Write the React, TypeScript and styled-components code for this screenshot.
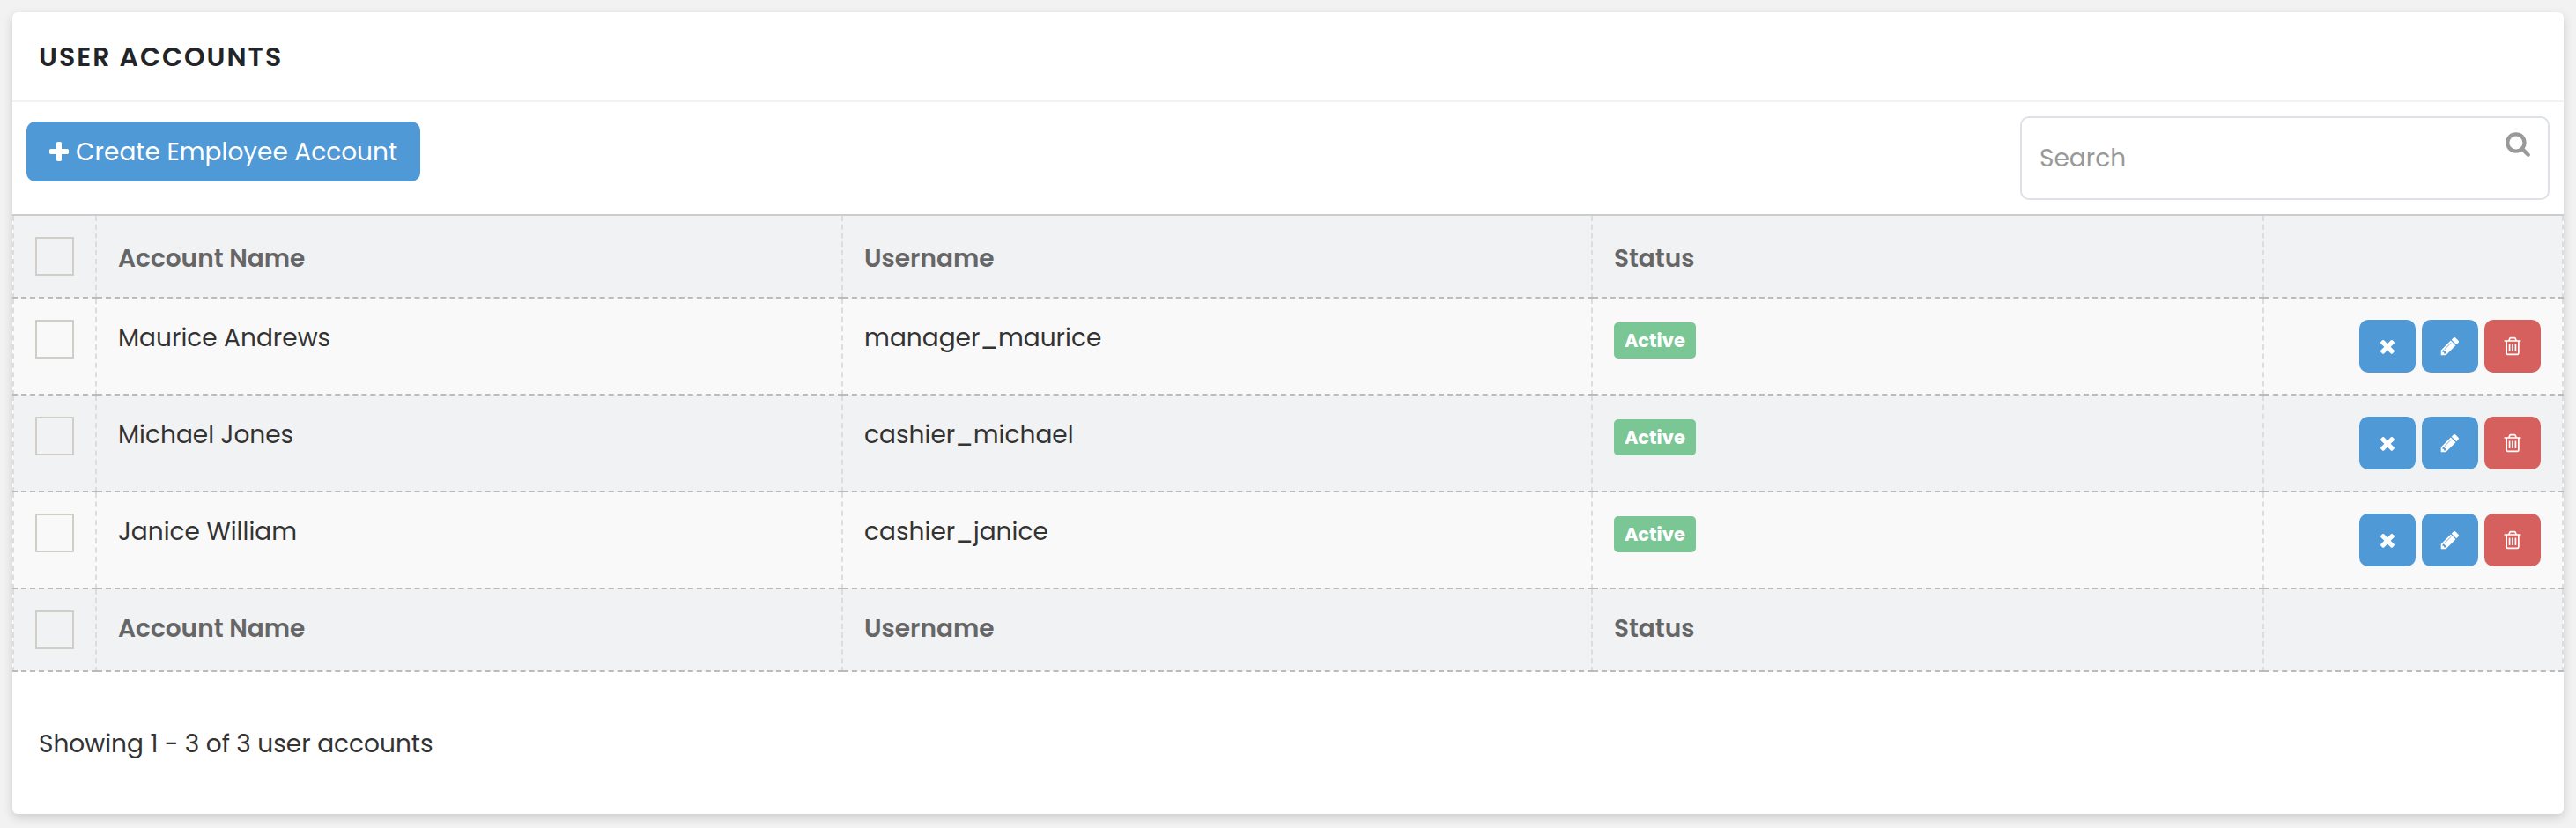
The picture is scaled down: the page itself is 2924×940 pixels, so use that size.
import React, { useState } from "react";
import styled, { createGlobalStyle } from "styled-components";

const GlobalStyle = createGlobalStyle`
  *, *::before, *::after { box-sizing: border-box; }
  body {
    margin: 0;
    background: #f2f2f2;
    color: #333;
    font-family: Poppins, Inter, "Liberation Sans", sans-serif;
    font-size: 28px;
    line-height: 42px;
  }
  button, input { font: inherit; }
`;

const Page = styled.main`
  padding: 14px 14px 16px;
`;

const Card = styled.section`
  background: #fff;
  border-radius: 6px;
  box-shadow: 0 4px 12px rgba(0, 0, 0, 0.16);
`;

const CardHeader = styled.header`
  padding: 30px 30px 28px;
  border-bottom: 2px solid #f3f3f3;
`;

const Title = styled.h1`
  margin: 0;
  color: #222427;
  font-size: 30px;
  font-weight: 600;
  letter-spacing: 2px;
  text-transform: uppercase;
`;

const Toolbar = styled.div`
  display: flex;
  align-items: flex-start;
  justify-content: space-between;
  padding: 16px;
`;

const Button = styled.button<{ $tone?: "primary" | "danger" }>`
  display: inline-flex;
  align-items: center;
  justify-content: center;
  border: 0;
  border-radius: 10px;
  background: ${({ $tone }) => ($tone === "danger" ? "#d6605d" : "#4f99d7")};
  color: #fff;
  cursor: pointer;
`;

const CreateButton = styled(Button)`
  gap: 5px;
  height: 68px;
  margin-top: 6px;
  padding: 1px 26px 0 23px;
`;

const ActionButton = styled(Button)`
  width: 64px;
  height: 60px;
  padding: 0;
`;

const SearchField = styled.label`
  position: relative;
  width: 601px;
  color: #999;
`;

const SearchInput = styled.input`
  display: block;
  width: 100%;
  height: 95px;
  padding: 0 70px 0 20px;
  border: 2px solid #dee2e6;
  border-radius: 10px;
  background: #fff;
  color: #333;
  outline: 0;
  &::placeholder { color: #999; opacity: 1; }
`;

const SearchIcon = styled.span`
  position: absolute;
  top: 16px;
  right: 21px;
  display: flex;
`;

const Table = styled.table`
  width: 100%;
  border-collapse: collapse;
  table-layout: fixed;
`;

const Column = styled.col<{ $width?: string }>`
  width: ${({ $width }) => $width ?? "auto"};
`;

const Row = styled.tr<{ $shaded?: boolean }>`
  background: ${({ $shaded }) => ($shaded ? "#f1f2f4" : "#f9f9f9")};
`;

const Cell = styled.td`
  padding: 24px;
  border: 2px dashed #ddd;
  border-top-color: #bbb;
  border-bottom-color: #bbb;
  text-align: left;
  vertical-align: top;
`;

const HeadCell = styled(Cell)<{ $top?: boolean }>`
  color: #666;
  font-weight: 600;
  line-height: ${({ $top }) => ($top ? "38px" : "42px")};
  vertical-align: ${({ $top }) => ($top ? "bottom" : "top")};
  ${({ $top }) => $top && "border-top: 2px solid #ccc;"}
`;

const Checkbox = styled.input`
  display: block;
  width: 44px;
  height: 44px;
  margin: 0;
  border: 2px solid #d0cec7;
  appearance: none;
  &:checked { background: #4f99d7; }
`;

const Badge = styled.span`
  display: block;
  width: fit-content;
  margin-top: 3px;
  padding: 0 12px;
  border-radius: 5px;
  background: #7ac695;
  color: #fff;
  font-size: 21px;
  font-weight: 700;
  line-height: 41px;
`;

const Actions = styled.div`
  display: flex;
  justify-content: flex-end;
  gap: 7px;
`;

const CardFooter = styled.footer`
  padding: 61px 30px 58px;
`;

const paths = {
  plus: "M1600 736v192q0 40-28 68t-68 28h-416v416q0 40-28 68t-68 28h-192q-40 0-68-28t-28-68v-416h-416q-40 0-68-28t-28-68v-192q0-40 28-68t68-28h416v-416q0-40 28-68t68-28h192q40 0 68 28t28 68v416h416q40 0 68 28t28 68z",
  times: "M1490 1322q0 40-28 68l-136 136q-28 28-68 28t-68-28l-294-294-294 294q-28 28-68 28t-68-28l-136-136q-28-28-28-68t28-68l294-294-294-294q-28-28-28-68t28-68l136-136q28-28 68-28t68 28l294 294 294-294q28-28 68-28t68 28l136 136q28 28 28 68t-28 68l-294 294 294 294q28 28 28 68z",
  pencil: "M491 1536l91-91-235-235-91 91v107h128v128h107zm523-928q0-22-22-22-10 0-17 7l-542 542q-7 7-7 17 0 22 22 22 10 0 17-7l542-542q7-7 7-17zm-54-192l416 416-832 832h-416v-416zm683 96q0 53-37 90l-166 166-416-416 166-165q36-38 90-38 53 0 91 38l235 234q37 39 37 91z",
  trash: "M704 736v576q0 14-9 23t-23 9h-64q-14 0-23-9t-9-23v-576q0-14 9-23t23-9h64q14 0 23 9t9 23zm256 0v576q0 14-9 23t-23 9h-64q-14 0-23-9t-9-23v-576q0-14 9-23t23-9h64q14 0 23 9t9 23zm256 0v576q0 14-9 23t-23 9h-64q-14 0-23-9t-9-23v-576q0-14 9-23t23-9h64q14 0 23 9t9 23zm128 724v-948h-896v948q0 22 7 40.5t14.5 27 10.5 8.5h832q3 0 10.5-8.5t14.5-27 7-40.5zm-672-1076h448l-48-117q-7-9-17-11h-317q-10 2-17 11zm928 32v64q0 14-9 23t-23 9h-96v948q0 83-47 143.5t-113 60.5h-832q-66 0-113-58.5t-47-141.5v-952h-96q-14 0-23-9t-9-23v-64q0-14 9-23t23-9h309l70-167q15-37 54-63t79-26h320q40 0 79 26t54 63l70 167h309q14 0 23 9t9 23z",
  search: "M1216 832q0-185-131.5-316.5t-316.5-131.5-316.5 131.5-131.5 316.5 131.5 316.5 316.5 131.5 316.5-131.5 131.5-316.5zm512 832q0 52-38 90t-90 38q-54 0-90-38l-343-342q-179 124-399 124-143 0-273.5-55.5t-225-150-150-225-55.5-273.5 55.5-273.5 150-225 225-150 273.5-55.5 273.5 55.5 225 150 150 225 55.5 273.5q0 220-124 399l343 343q37 37 37 90z",
};

function Icon({ name, size = 24 }: { name: keyof typeof paths; size?: number }) {
  return (
    <svg width={size} height={size} viewBox="0 0 1792 1792" fill="currentColor" aria-hidden="true">
      <path d={paths[name]} />
    </svg>
  );
}

const accounts = [
  { name: "Maurice Andrews", username: "manager_maurice", status: "Active" },
  { name: "Michael Jones", username: "cashier_michael", status: "Active" },
  { name: "Janice William", username: "cashier_janice", status: "Active" },
];

interface HeadingRowProps {
  top?: boolean;
  checked: boolean;
  onToggle: () => void;
}

function HeadingRow({ top, checked, onToggle }: HeadingRowProps) {
  return (
    <Row $shaded>
      <HeadCell as="th" $top={top}>
        <Checkbox type="checkbox" aria-label="Select all accounts" checked={checked} onChange={onToggle} />
      </HeadCell>
      <HeadCell as="th" $top={top}>Account Name</HeadCell>
      <HeadCell as="th" $top={top}>Username</HeadCell>
      <HeadCell as="th" $top={top}>Status</HeadCell>
      <HeadCell $top={top} />
    </Row>
  );
}

export default function App() {
  const [selected, setSelected] = useState<string[]>([]);
  const [query, setQuery] = useState("");
  const allSelected = selected.length === accounts.length;
  const toggleAll = () => setSelected(allSelected ? [] : accounts.map((a) => a.username));
  const toggle = (id: string) =>
    setSelected((s) => (s.includes(id) ? s.filter((x) => x !== id) : [...s, id]));

  return (
    <>
      <GlobalStyle />
      <Page>
        <Card>
          <CardHeader>
            <Title>User Accounts</Title>
          </CardHeader>
          <Toolbar>
            <CreateButton type="button">
              <Icon name="plus" size={28} />
              Create Employee Account
            </CreateButton>
            <SearchField>
              <SearchInput
                type="text"
                aria-label="Search"
                placeholder="Search"
                value={query}
                onChange={(e) => setQuery(e.target.value)}
              />
              <SearchIcon>
                <Icon name="search" size={30} />
              </SearchIcon>
            </SearchField>
          </Toolbar>
          <Table>
            <colgroup>
              <Column $width="94px" />
              <Column $width="29.27%" />
              <Column $width="29.4%" />
              <Column $width="26.33%" />
              <Column />
            </colgroup>
            <thead>
              <HeadingRow top checked={allSelected} onToggle={toggleAll} />
            </thead>
            <tbody>
              {accounts.map((account, index) => (
                <Row key={account.username} $shaded={index % 2 === 1}>
                  <Cell>
                    <Checkbox
                      type="checkbox"
                      aria-label={`Select ${account.name}`}
                      checked={selected.includes(account.username)}
                      onChange={() => toggle(account.username)}
                    />
                  </Cell>
                  <Cell>{account.name}</Cell>
                  <Cell>{account.username}</Cell>
                  <Cell>
                    <Badge>{account.status}</Badge>
                  </Cell>
                  <Cell>
                    <Actions>
                      <ActionButton type="button" aria-label={`Disable ${account.name}`}>
                        <Icon name="times" />
                      </ActionButton>
                      <ActionButton type="button" aria-label={`Edit ${account.name}`}>
                        <Icon name="pencil" />
                      </ActionButton>
                      <ActionButton type="button" $tone="danger" aria-label={`Delete ${account.name}`}>
                        <Icon name="trash" />
                      </ActionButton>
                    </Actions>
                  </Cell>
                </Row>
              ))}
            </tbody>
            <tfoot>
              <HeadingRow checked={allSelected} onToggle={toggleAll} />
            </tfoot>
          </Table>
          <CardFooter>Showing 1 - 3 of 3 user accounts</CardFooter>
        </Card>
      </Page>
    </>
  );
}
